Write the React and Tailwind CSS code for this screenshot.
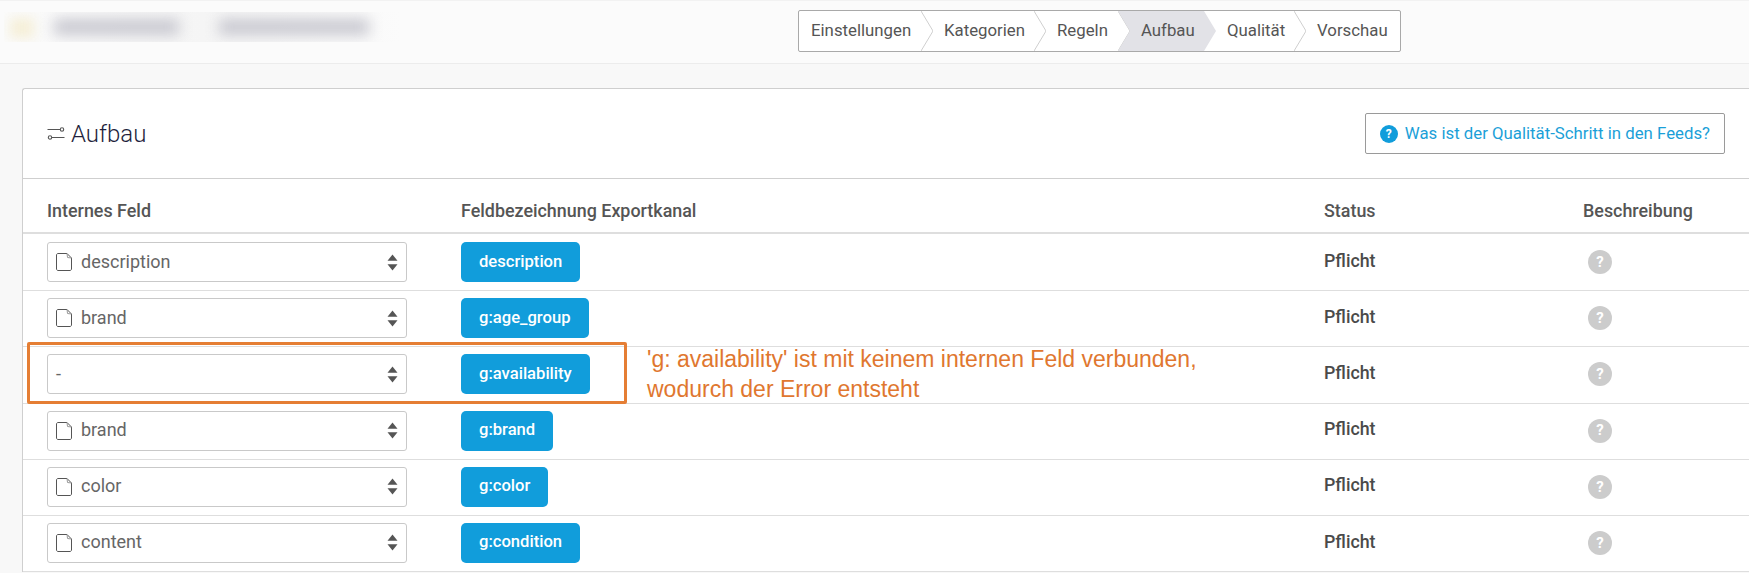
import React from 'react';

const steps = [
  { label: 'Einstellungen', w: 'w-[122px]', pad: 'pl-3' },
  { label: 'Kategorien', w: 'w-[113px]', pad: 'pl-[23px]' },
  { label: 'Regeln', w: 'w-[84px]', pad: 'pl-[23px]' },
  { label: 'Aufbau', w: 'w-[86px]', pad: 'pl-[23px]', active: true },
  { label: 'Qualität', w: 'w-[90px]', pad: 'pl-[23px]' },
  { label: 'Vorschau', w: 'w-[106px]', pad: 'pl-[23px]' },
];

const rows = [
  { field: 'description', channel: 'description' },
  { field: 'brand', channel: 'g:age_group' },
  { field: '-', channel: 'g:availability' },
  { field: 'brand', channel: 'g:brand' },
  { field: 'color', channel: 'g:color' },
  { field: 'content', channel: 'g:condition' },
];

const gridCols = 'grid grid-cols-[414px_863px_259px_1fr] px-6';

const SliderIcon = () => (
  <svg width="18" height="14" viewBox="0 0 18 14" fill="none" stroke="#555" strokeWidth="1.1">
    <path d="M0.5 2.5H13M5 10.5H17.5" />
    <circle cx="15" cy="2.5" r="1.7" />
    <circle cx="3" cy="10.5" r="1.7" />
  </svg>
);

const SortIcon = () => (
  <svg width="11" height="17" viewBox="0 0 11 17" fill="#555">
    <path d="M5.5 0.5L10.5 6.8H0.5Z" />
    <path d="M5.5 16.5L10.5 10.2H0.5Z" />
  </svg>
);

const FileIcon = () => (
  <svg width="16" height="18" viewBox="0 0 16 18" fill="none" stroke="#555" strokeWidth="1">
    <path d="M2 0.5H11L15.5 5V16C15.5 16.8 14.8 17.5 14 17.5H2C1.2 17.5 0.5 16.8 0.5 16V2C0.5 1.2 1.2 0.5 2 0.5Z" />
    <path d="M11 0.5L11.5 4.5L15.5 5" stroke="#999" />
  </svg>
);

const Breadcrumb = () => (
  <div className="flex h-[42px] border border-[#a9a9a9] rounded-[2px] bg-white">
    {steps.map((s, i) => (
      <div key={s.label} className={`relative flex items-center ${s.pad} ${s.w}`}>
        {s.active && (
          <svg className="absolute left-0 top-0 h-10 w-[98px]" viewBox="0 0 98 40" fill="#e2e2e7">
            <path d="M0 0H86L98 20L86 40H0L12 20Z" />
          </svg>
        )}
        <span className="relative text-[16.8px] text-[#555]">{s.label}</span>
        {i < steps.length - 1 && !s.active && (
          <svg className="absolute -right-[12px] top-0 h-10 w-3" viewBox="0 0 12 40" fill="none" stroke="#cfcfcf">
            <path d="M0 0L12 20L0 40" />
          </svg>
        )}
      </div>
    ))}
  </div>
);

const Row = ({ field, channel, first }) => (
  <div className={`${gridCols} h-[56.2px] items-start ${first ? 'pt-2' : 'border-t border-[#dedede] pt-[7px]'}`}>
    <div className="flex items-center justify-between w-[360px] h-10 border border-[#c9c9c9] rounded-[3px] pl-2 pr-2">
      <div className="flex items-center gap-[9px] text-[18px] text-[#666]">
        {field !== '-' && <FileIcon />}
        <span className="-mt-[2px]">{field}</span>
      </div>
      <SortIcon />
    </div>
    <div>
      <span className="inline-flex items-center h-10 px-[18px] rounded-[5px] bg-[#119ddb] text-white text-[16.6px] font-medium">
        {channel}
      </span>
    </div>
    <div className="h-10 flex items-center pb-[2px] text-[17.8px] font-medium text-[#4a4a4a]">Pflicht</div>
    <div className="h-10 flex items-center pl-[5px]">
      <span className="flex items-center justify-center w-6 h-6 rounded-full bg-[#cccccc] text-white text-[15px] font-bold">?</span>
    </div>
  </div>
);

const App = () => {
  return (
    <div className="relative w-[1749px] h-[573px] overflow-hidden bg-[#f8f8f8] font-['Roboto',sans-serif]">
      <div className="flex items-start h-[64px] bg-[#fbfbfb] border-t border-[#f2f2f2] border-b-[1px] border-b-[#ececec]">
        <div className="relative w-[396px] h-[30px] mt-[11px] ml-[4px] bg-gradient-to-r from-[#fbfbfb] via-[#f5f5f5] to-[#fbfbfb] overflow-hidden">
          <div className="absolute left-[50px] top-[7px] w-[125px] h-4 bg-[#c8c8d0] blur-[7px]" />
          <div className="absolute left-[215px] top-[7px] w-[150px] h-4 bg-[#c8c8d0] blur-[7px]" />
          <div className="absolute left-[6px] top-[6px] w-6 h-5 bg-[#f5efd8] blur-[6px]" />
        </div>
        <div className="ml-[398px] mt-[9px]">
          <Breadcrumb />
        </div>
      </div>

      <div className="ml-[22px] mt-[24px] bg-white border-l border-t border-[#cfcfcf] rounded-tl-[3px]">
        <div className="flex items-center justify-between h-[90px] border-b border-[#cfcfcf] pl-6 pr-6">
          <div className="flex items-center gap-[6px] text-[#1f1f3d]">
            <SliderIcon />
            <span className="text-[24px] font-light">Aufbau</span>
          </div>
          <button className="flex items-center gap-[7px] h-[41px] px-[14px] bg-white border border-[#9a9a9a] rounded-[2px] text-[16.8px] text-[#1b9fd8]">
            <span className="flex items-center justify-center w-[18px] h-[18px] rounded-full bg-[#119ddb] text-white text-[12px] font-bold">?</span>
            Was ist der Qualität-Schritt in den Feeds?
          </button>
        </div>

        <div className={`${gridCols} h-[55px] items-center pt-3 border-b-2 border-[#dedede] text-[17.9px] font-medium text-[#555]`}>
          <div>Internes Feld</div>
          <div>Feldbezeichnung Exportkanal</div>
          <div>Status</div>
          <div>Beschreibung</div>
        </div>

        <div className="border-b border-[#dedede]">
          {rows.map((r, i) => (
            <Row key={r.channel} field={r.field} channel={r.channel} first={i === 0} />
          ))}
        </div>
      </div>

      {/* annotation laid over the screenshot */}
      <div className="absolute left-[27px] top-[342px] w-[600px] h-[62px] border-[3px] border-[#e57e34] rounded-[2px]" />
      <div className="absolute left-[647px] top-[344px] font-['Liberation_Sans',sans-serif] text-[23px] leading-[30px] text-[#e0772f]">
        <div>'g: availability' ist mit keinem internen Feld verbunden,</div>
        <div>wodurch der Error entsteht</div>
      </div>
    </div>
  );
};

export default App;
